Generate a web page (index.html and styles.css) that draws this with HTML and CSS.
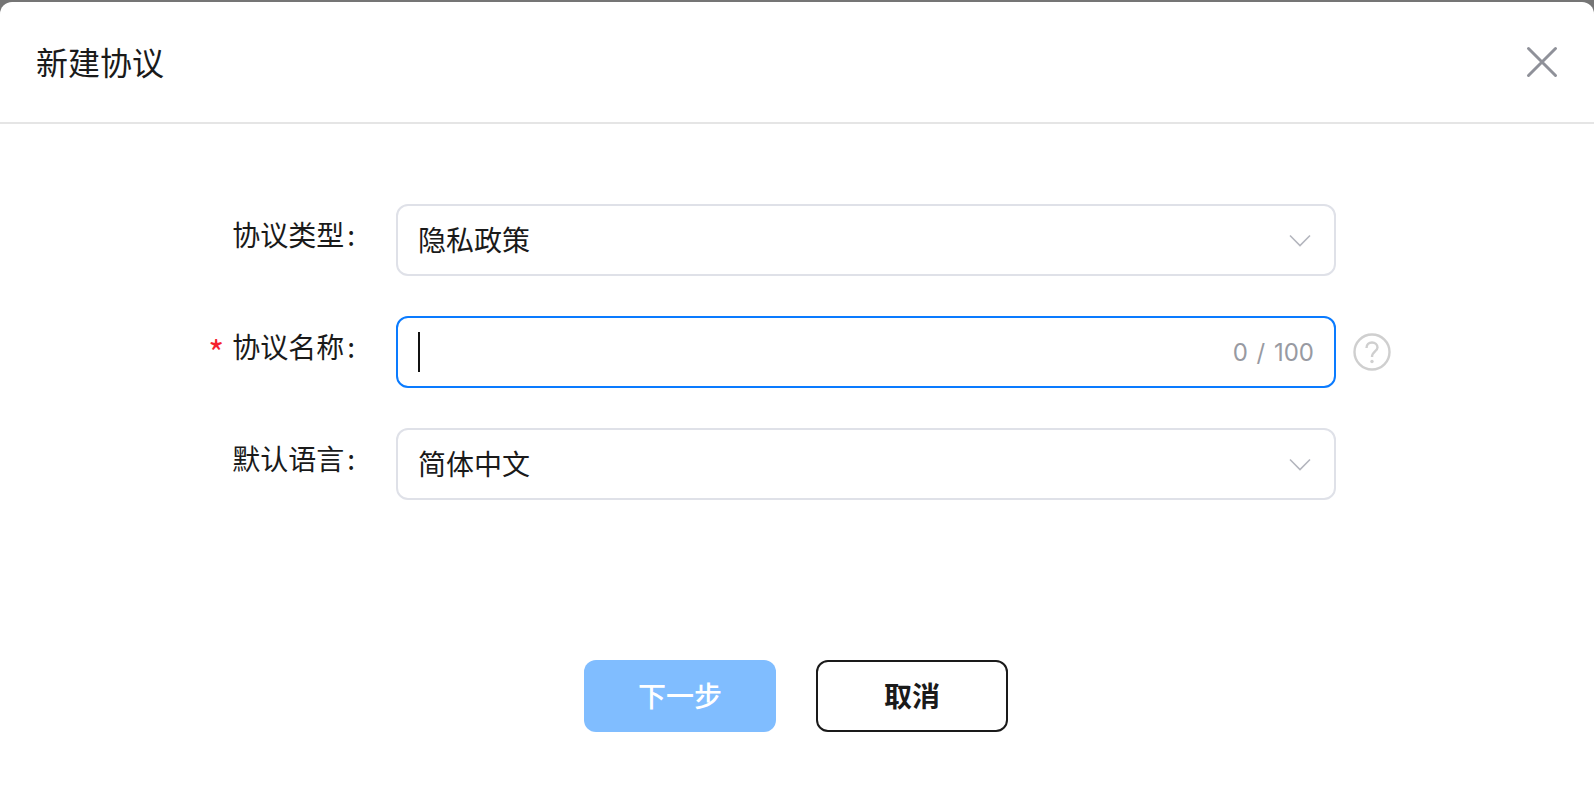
FILE: index.html
```html
<!DOCTYPE html>
<html lang="zh-CN">
<head>
  <meta charset="UTF-8" />
  <title>新建协议</title>
  <link rel="stylesheet" href="styles.css">
</head>
<body>
  <div class="dialog">
    <div class="dialog-header">
      <h2 class="dialog-title">新建协议</h2>
      <svg class="close-icon" width="32" height="32" viewBox="0 0 32 32">
        <path d="M2.5 2.5 L29.5 29.5 M29.5 2.5 L2.5 29.5" />
      </svg>
    </div>

    <div class="form">
      <div class="form-row">
        <label class="form-label">协议类型<span class="colon">:</span></label>
        <div class="field">
          <span class="field-value">隐私政策</span>
          <svg class="arrow-icon" width="22" height="13" viewBox="0 0 22 13">
            <path d="M1 1.5 L11 11.5 L21 1.5" />
          </svg>
        </div>
      </div>

      <div class="form-row">
        <label class="form-label"><span class="required">*</span>协议名称<span class="colon">:</span></label>
        <div class="field field-focus">
          <span class="caret"></span>
          <span class="counter">0 / 100</span>
        </div>
        <svg class="help-icon" width="38" height="38" viewBox="0 0 38 38">
          <circle cx="19" cy="19" r="17.5" />
          <path d="M13.5 15 C13.5 11.5 16 9.5 19 9.5 C22 9.5 24.5 11.5 24.5 14.5 C24.5 18 19 18.5 19 24" />
          <circle class="help-dot" cx="19" cy="28.5" r="1.7" />
        </svg>
      </div>

      <div class="form-row">
        <label class="form-label">默认语言<span class="colon">:</span></label>
        <div class="field">
          <span class="field-value">简体中文</span>
          <svg class="arrow-icon" width="22" height="13" viewBox="0 0 22 13">
            <path d="M1 1.5 L11 11.5 L21 1.5" />
          </svg>
        </div>
      </div>
    </div>

    <div class="dialog-footer">
      <button class="btn btn-primary">下一步</button>
      <button class="btn btn-default">取消</button>
    </div>
  </div>
</body>
</html>
```

FILE: styles.css
```css
html, body {
  height: 100%;
}

body {
  margin: 0;
  background: #757575;
  font-family: "Noto Sans CJK SC", "Inter", sans-serif;
  color: #1a1a1a;
  overflow: hidden;
}

.dialog {
  box-sizing: border-box;
  height: 786px;
  margin-top: 2px;
  background: #fff;
  border-radius: 12px 12px 0 0;
}

.dialog-header {
  box-sizing: border-box;
  height: 122px;
  padding: 0 36px;
  display: flex;
  align-items: center;
  justify-content: space-between;
  border-bottom: 2px solid #e5e5e5;
}

.dialog-title {
  margin: -2px 0 0;
  font-size: 32px;
  font-weight: 400;
  line-height: 40px;
}

.close-icon path {
  fill: none;
  stroke: #8f9199;
  stroke-width: 3;
  stroke-linecap: round;
}

.form {
  padding-top: 80px;
  display: flex;
  flex-direction: column;
  gap: 40px;
}

.form-row {
  display: flex;
  align-items: flex-start;
}

.form-label {
  width: 396px;
  box-sizing: border-box;
  padding-right: 41px;
  text-align: right;
  font-size: 28px;
  line-height: 60px;
  white-space: nowrap;
}

.colon {
  margin-left: 3px;
}

.required {
  color: #f5222d;
  font-size: 34px;
  line-height: 0;
  vertical-align: -8px;
  margin-right: 8px;
}

.field {
  box-sizing: border-box;
  width: 940px;
  height: 72px;
  padding: 0 20px;
  border: 2px solid #dfe1e8;
  border-radius: 12px;
  display: flex;
  align-items: center;
  justify-content: space-between;
  font-size: 28px;
}

.field-value {
  margin-top: -2px;
}

.field-focus {
  border-color: #0a7bff;
}

.caret {
  width: 2px;
  height: 40px;
  background: #111;
}

.counter {
  font-family: "Inter", sans-serif;
  font-size: 24px;
  word-spacing: 2px;
  color: #989aa2;
}

.arrow-icon {
  margin-right: 3px;
}

.arrow-icon path {
  fill: none;
  stroke: #b4b6be;
  stroke-width: 1.6;
}

.help-icon {
  align-self: center;
  margin-left: 17px;
}

.help-icon circle,
.help-icon path {
  fill: none;
  stroke: #cfcfcf;
  stroke-width: 2.4;
}

.help-icon .help-dot {
  fill: #cfcfcf;
  stroke: none;
}

.dialog-footer {
  margin-top: 160px;
  display: flex;
  justify-content: center;
  gap: 40px;
  padding-right: 2px;
}

.btn {
  box-sizing: border-box;
  width: 192px;
  height: 72px;
  padding: 0 0 2px;
  border-radius: 12px;
  font-family: inherit;
  font-size: 28px;
  font-weight: 600;
  cursor: pointer;
}

.btn-primary {
  background: #80bdff;
  border: none;
  color: #fff;
  font-weight: 500;
}

.btn-default {
  background: #fff;
  border: 2px solid #1a1a1a;
  color: #1a1a1a;
}
```
